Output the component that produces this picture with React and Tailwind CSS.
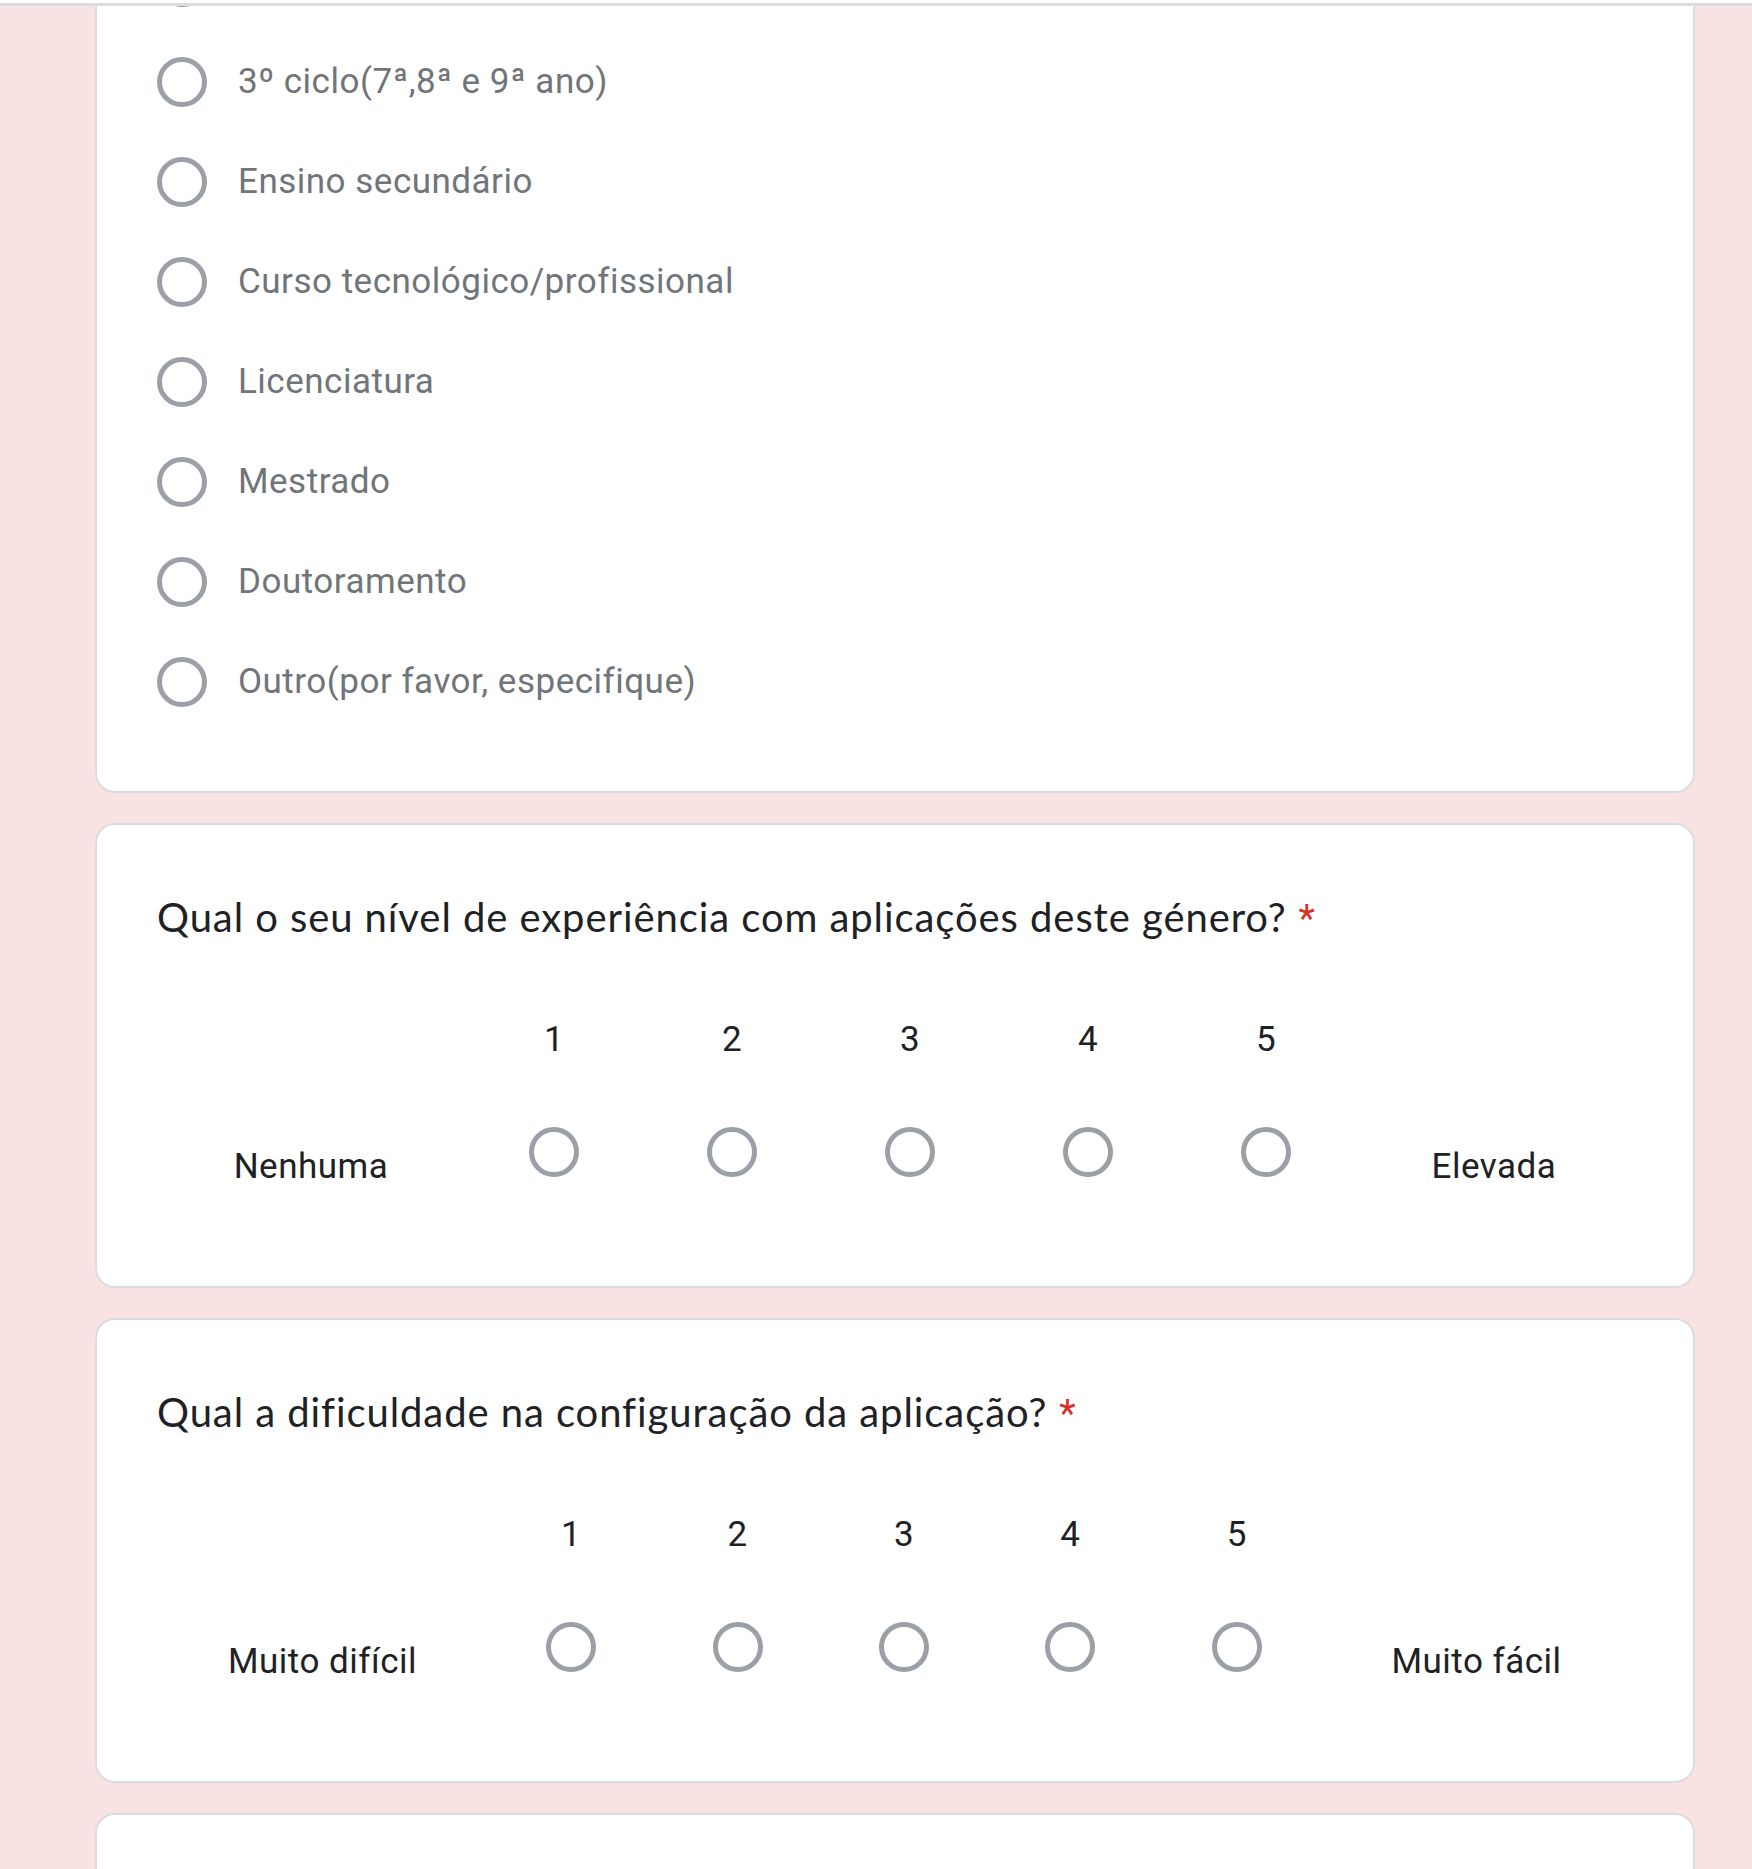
const ROBOTO = { fontFamily: 'Roboto, "Liberation Sans", Arial, sans-serif' };
const TITLE = { fontFamily: 'Lato, "Open Sans", "Liberation Sans", sans-serif' };

const options = [
  "",
  "3º ciclo(7ª,8ª e 9ª ano)",
  "Ensino secundário",
  "Curso tecnológico/profissional",
  "Licenciatura",
  "Mestrado",
  "Doutoramento",
  "Outro(por favor, especifique)",
];

function Radio() {
  return <div className="w-[50px] h-[50px] shrink-0 rounded-full border-[5px] border-[#9aa0a6] bg-white" />;
}

function ScaleCard({ title, left, right, lw, rw }) {
  return (
    <div className="bg-white border-2 border-[#dadce0] rounded-[20px] px-[60px] pt-[62px] pb-[102px]">
      <div className="h-[60px] text-[40px] leading-[60px] tracking-[0.92px] text-[#202124]" style={TITLE}>
        {title}
        <span className="text-[#d93025] pl-[12px] text-[38px] leading-none tracking-normal" style={ROBOTO}>*</span>
      </div>
      <div className="flex mt-[63px] text-[#202124] tracking-[0.5px]" style={ROBOTO}>
        <div className={lw + " shrink-0 flex items-end justify-center"}>
          <span className="text-[35px] leading-[35px]">{left}</span>
        </div>
        {[1, 2, 3, 4, 5].map((n) => (
          <div key={n} className="flex-1 flex flex-col items-center pb-[7px]">
            <div className="h-[60px] text-[35px] leading-[60px]">{n}</div>
            <div className="mt-[57px]">
              <Radio />
            </div>
          </div>
        ))}
        <div className={rw + " shrink-0 flex items-end justify-center"}>
          <span className="text-[35px] leading-[35px]">{right}</span>
        </div>
      </div>
    </div>
  );
}

export default function App() {
  return (
    <div className="h-[1869px] overflow-hidden bg-[#f9e2e2]">
      <div className="h-[3px] bg-white" />
      <div className="h-[3px] bg-[#dadce0]" />
      <div className="h-[1863px] overflow-hidden">
        <div className="ml-[95px] w-[1600px] flex flex-col gap-[30px] -mt-[76px]">
          <div className="bg-white border-2 border-[#dadce0] rounded-[20px] px-[60px] pb-[59px]">
            {options.map((o, i) => (
              <div key={i} className="h-[100px] flex items-center">
                <Radio />
                {o && (
                  <span
                    className="ml-[31px] text-[35px] leading-[50px] tracking-[0.5px] text-[#70757a]"
                    style={ROBOTO}
                  >
                    {o}
                  </span>
                )}
              </div>
            ))}
          </div>
          <ScaleCard
            title="Qual o seu nível de experiência com aplicações deste género?"
            left="Nenhuma"
            right="Elevada"
            lw="w-[308px]"
            rw="w-[278px]"
          />
          <ScaleCard
            title="Qual a dificuldade na configuração da aplicação?"
            left="Muito difícil"
            right="Muito fácil"
            lw="w-[331px]"
            rw="w-[313px]"
          />
          <div className="bg-white border-2 border-[#dadce0] rounded-[20px] h-[300px]" />
        </div>
      </div>
    </div>
  );
}
